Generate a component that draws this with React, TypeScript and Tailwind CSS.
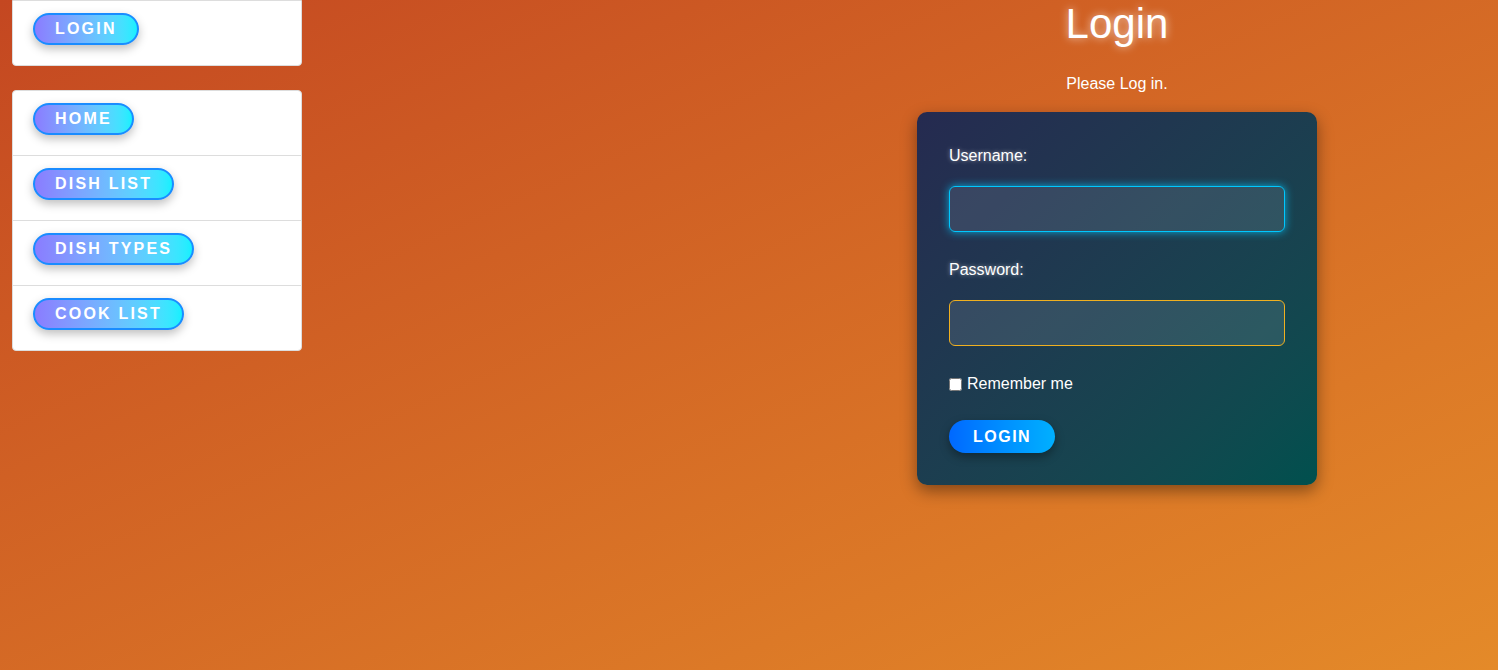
import { type JSX } from "react";

interface NavLink {
  title: string;
}

const links: NavLink[] = [
  { title: "Home" },
  { title: "Dish list" },
  { title: "Dish types" },
  { title: "Cook list" },
];

function PillLink({ title }: NavLink): JSX.Element {
  return (
    <a
      href="#"
      className="inline-block h-[32px] rounded-full border-2 border-[#1a8cff] bg-gradient-to-r from-[#8a7cff] to-[#12f0ff] px-5 text-[16px] leading-[28px] font-bold uppercase tracking-[2.2px] text-white shadow-[0_4px_10px_rgba(0,0,0,0.25)]"
    >
      {title}
    </a>
  );
}

export default function App(): JSX.Element {
  return (
    <div className="min-h-[670px] w-full bg-gradient-to-br from-[#c44721] to-[#e48a29] font-['Liberation_Sans',Arial,sans-serif] text-white">
      <div className="grid grid-cols-[736px_1fr]">
        {/* Sidebar */}
        <aside className="pl-3">
          <div className="w-[290px] rounded-b border border-[#dddddd] bg-white">
            <div className="h-[64px] px-5 pt-3">
              <PillLink title="Login" />
            </div>
          </div>

          <ul className="mt-6 w-[290px] rounded border border-[#dddddd] bg-white">
            {links.map((link: NavLink, i: number) => (
              <li
                key={link.title}
                className={
                  i > 0
                    ? "h-[65px] border-t border-[#dddddd] px-5 pt-3"
                    : "h-[64px] px-5 pt-3"
                }
              >
                <PillLink title={link.title} />
              </li>
            ))}
          </ul>
        </aside>

        {/* Content */}
        <main className="flex flex-col items-center">
          <h1 className="text-[42px] leading-[48px] [text-shadow:0_0_8px_rgba(255,255,255,0.7)]">
            Login
          </h1>
          <p className="mt-[24px] text-[16px] leading-[24px]">Please Log in.</p>

          <form className="mt-[16px] w-[400px] rounded-[10px] bg-gradient-to-br from-[#252a50] to-[#00504e] px-8 pt-[32px] pb-8 shadow-[0_6px_16px_rgba(0,0,0,0.4)]">
            <label className="block text-[16px] leading-[24px] [text-shadow:0_0_4px_rgba(255,255,255,0.5)]">
              Username:
            </label>
            <input
              type="text"
              autoFocus
              className="mt-[18px] block h-[46px] w-full rounded-md border border-[#00c8ff] bg-white/10 px-3 text-white shadow-[0_0_8px_rgba(0,200,255,0.8)] outline-none"
            />

            <label className="mt-[26px] block text-[16px] leading-[24px] [text-shadow:0_0_4px_rgba(255,255,255,0.5)]">
              Password:
            </label>
            <input
              type="password"
              className="mt-[18px] block h-[46px] w-full rounded-md border border-[#f0b020] bg-white/10 px-3 text-white outline-none"
            />

            <div className="mt-[26px] flex h-[24px] items-center">
              <input type="checkbox" className="m-0 h-[13px] w-[13px]" />
              <span className="ml-[5px] text-[16px]">Remember me</span>
            </div>

            <button
              type="button"
              className="mt-[24px] h-[33px] rounded-full bg-gradient-to-r from-[#0068ff] to-[#00b0ff] px-[24px] text-[16px] font-bold uppercase tracking-[1.5px] text-white shadow-[0_4px_10px_rgba(0,0,0,0.35)]"
            >
              Login
            </button>
          </form>
        </main>
      </div>
    </div>
  );
}
